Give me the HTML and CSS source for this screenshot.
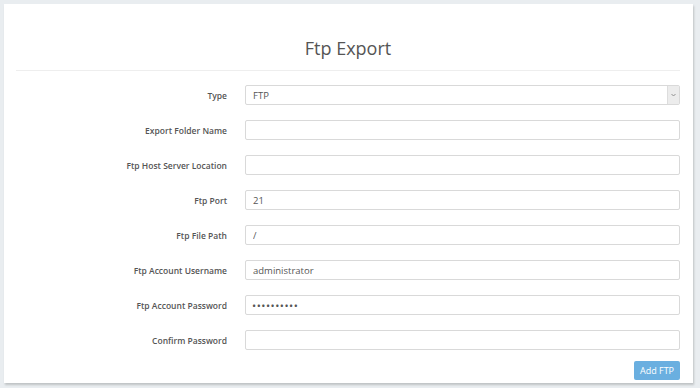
FILE: index.html
```html
<!DOCTYPE html>
<html>
<head>
    <title>Ftp Export</title>
    <link rel="stylesheet" href="styles.css">
</head>
<body>
    <div class="card">
        <h1 class="title">Ftp Export</h1>
        <form class="form">
            <div class="row">
                <label>Type</label>
                <div class="select">
                    <span>FTP</span>
                    <span class="arrow">
                        <svg width="5" height="4" viewBox="0 0 5 4"><path d="M0.5 1 L2.5 3 L4.5 1" fill="none" stroke="#888" stroke-width="0.9"/></svg>
                    </span>
                </div>
            </div>
            <div class="row">
                <label>Export Folder Name</label>
                <input type="text" value="">
            </div>
            <div class="row">
                <label>Ftp Host Server Location</label>
                <input type="text" value="">
            </div>
            <div class="row">
                <label>Ftp Port</label>
                <input type="text" value="21">
            </div>
            <div class="row">
                <label>Ftp File Path</label>
                <input type="text" value="/">
            </div>
            <div class="row">
                <label>Ftp Account Username</label>
                <input type="text" value="administrator">
            </div>
            <div class="row">
                <label>Ftp Account Password</label>
                <input type="password" class="secret" value="1234567890">
            </div>
            <div class="row">
                <label>Confirm Password</label>
                <input type="password" class="secret" value="">
            </div>
            <div class="actions">
                <button type="button">Add FTP</button>
            </div>
        </form>
    </div>
</body>
</html>
```

FILE: styles.css
```css
body {
    margin: 0;
    padding: 4px 7px 5px 4px;
    background-color: #e9edf0;
    font-family: "Open Sans", sans-serif;
    color: #555;
}
.card {
    background-color: #fff;
    height: 379px;
    box-sizing: border-box;
    padding: 30px 13px 0 12px;
    box-shadow: 1px 2px 2px rgba(0, 0, 0, 0.18);
}
.title {
    margin: 0;
    font-size: 18px;
    font-weight: 400;
    line-height: 28px;
    text-align: center;
    color: #555;
    padding-bottom: 8px;
    border-bottom: 1px solid #eee;
}
.form {
    padding-top: 14px;
}
.row {
    display: grid;
    grid-template-columns: 211px 1fr;
    column-gap: 18px;
    align-items: center;
    margin-bottom: 15px;
}
.row label {
    text-align: right;
    font-size: 8.5px;
    font-weight: 600;
    color: #555;
}
.row input,
.select {
    height: 20px;
    box-sizing: border-box;
    border: 1px solid #d9d9d9;
    border-radius: 2px;
    padding: 0 7px;
    font-family: "Open Sans", sans-serif;
    font-size: 9.5px;
    color: #555;
    width: 100%;
    margin: 0;
}
.row input.secret {
    font-size: 11px;
    letter-spacing: 0.5px;
    padding-left: 6px;
}
.select {
    display: flex;
    align-items: center;
    justify-content: space-between;
    padding-right: 0;
}
.arrow {
    display: flex;
    align-items: center;
    justify-content: center;
    width: 11px;
    height: 18px;
    background-color: #ececec;
    border-left: 1px solid #ddd;
}
.actions {
    display: flex;
    justify-content: flex-end;
    margin-top: -4px;
}
button {
    background-color: #6aafe0;
    color: #fff;
    border: none;
    border-radius: 2px;
    width: 46px;
    height: 19px;
    padding: 0;
    font-family: "Open Sans", sans-serif;
    font-size: 9px;
}
```
